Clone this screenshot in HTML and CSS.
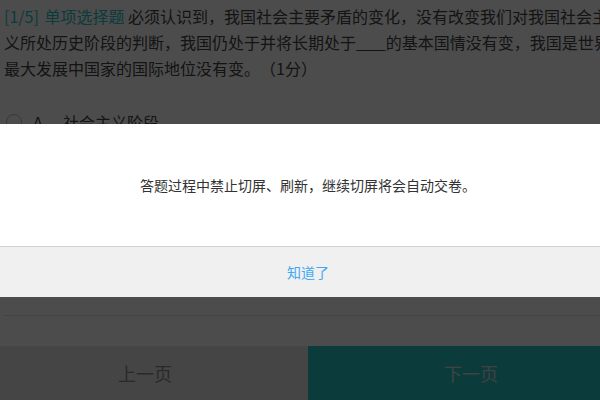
FILE: index.html
```html
<!DOCTYPE html>
<html lang="zh-CN">
<head>
    <meta charset="UTF-8">
    <title>在线答题</title>
    <link rel="stylesheet" href="styles.css">
</head>
<body>
    <div class="page">
        <div class="question">
            <p class="stem"><span class="tag">[1/5] 单项选择题</span> 必须认识到，我国社会主要矛盾的变化，没有改变我们对我国社会主义所处历史阶段的判断，我国仍处于并将长期处于<span class="blank">____</span>的基本国情没有变，我国是世界最大发展中国家的国际地位没有变。（1分）</p>
            <ul class="options">
                <li><span class="radio"></span><span class="key">A</span><span class="text">社会主义阶段</span></li>
                <li><span class="radio"></span><span class="key">B</span><span class="text">社会主义初级阶段</span></li>
                <li><span class="radio"></span><span class="key">C</span><span class="text">社会主义中级阶段</span></li>
                <li><span class="radio"></span><span class="key">D</span><span class="text">社会主义高级阶段</span></li>
            </ul>
        </div>
        <div class="pager">
            <a href="javascript:;" class="prev">上一页</a>
            <a href="javascript:;" class="next">下一页</a>
        </div>
    </div>
    <!--切屏提示弹窗-->
    <div class="mask"></div>
    <div class="dialog">
        <div class="dialog-body">答题过程中禁止切屏、刷新，继续切屏将会自动交卷。</div>
        <div class="dialog-foot"><a href="javascript:;">知道了</a></div>
    </div>
</body>
</html>
```

FILE: styles.css
```css
*{
    margin: 0;
    padding: 0;
}
html{
    overflow: hidden;
}
body{
    font-family: "Noto Sans CJK SC", "Noto Sans", sans-serif;
    background: #fff;
    text-spacing-trim: space-all;
}
a{
    text-decoration: none;
}
.page{
    width: 616px;
}
.question{
    padding: 3px 4px 0;
}
.stem{
    font-size: 16px;
    line-height: 26px;
    color: #444;
}
.tag{
    color: #25c5c5;
    word-spacing: 2px;
}
.blank{
    letter-spacing: -2px;
    margin-right: 2px;
}
.options{
    list-style: none;
    margin-top: 21px;
    padding-bottom: 53px;
    border-bottom: 1px dotted #ccc;
}
.options li{
    display: flex;
    align-items: center;
    height: 40px;
    font-size: 16px;
    color: #444;
}
.radio{
    width: 14px;
    height: 14px;
    border: 1px solid #bbb;
    border-radius: 50%;
    margin-left: 2px;
}
.key{
    margin-left: 11px;
    width: 30px;
}
.pager{
    display: flex;
    height: 54px;
    margin-top: 30px;
}
.pager a{
    flex: 1;
    display: flex;
    align-items: center;
    justify-content: center;
    font-size: 18px;
}
.prev{
    background: #e6e6e6;
    color: #8c8c8c;
    padding-right: 18px;
}
.next{
    background: #25c5c5;
    color: #ddd;
    padding-left: 18px;
}
.mask{
    position: fixed;
    left: 0;
    top: 0;
    right: 0;
    bottom: 0;
    background: rgba(0,0,0,.7);
}
.dialog{
    position: fixed;
    left: 0;
    top: 124px;
    width: 616px;
    background: #fff;
}
.dialog-body{
    height: 122px;
    display: flex;
    align-items: center;
    justify-content: center;
    font-size: 14px;
    color: #333;
    border-bottom: 1px solid #d2d2d2;
}
.dialog-foot{
    height: 50px;
    background: #f0f0f0;
    display: flex;
    align-items: center;
    justify-content: center;
}
.dialog-foot a{
    font-size: 14px;
    color: #3fa9f5;
}
```
